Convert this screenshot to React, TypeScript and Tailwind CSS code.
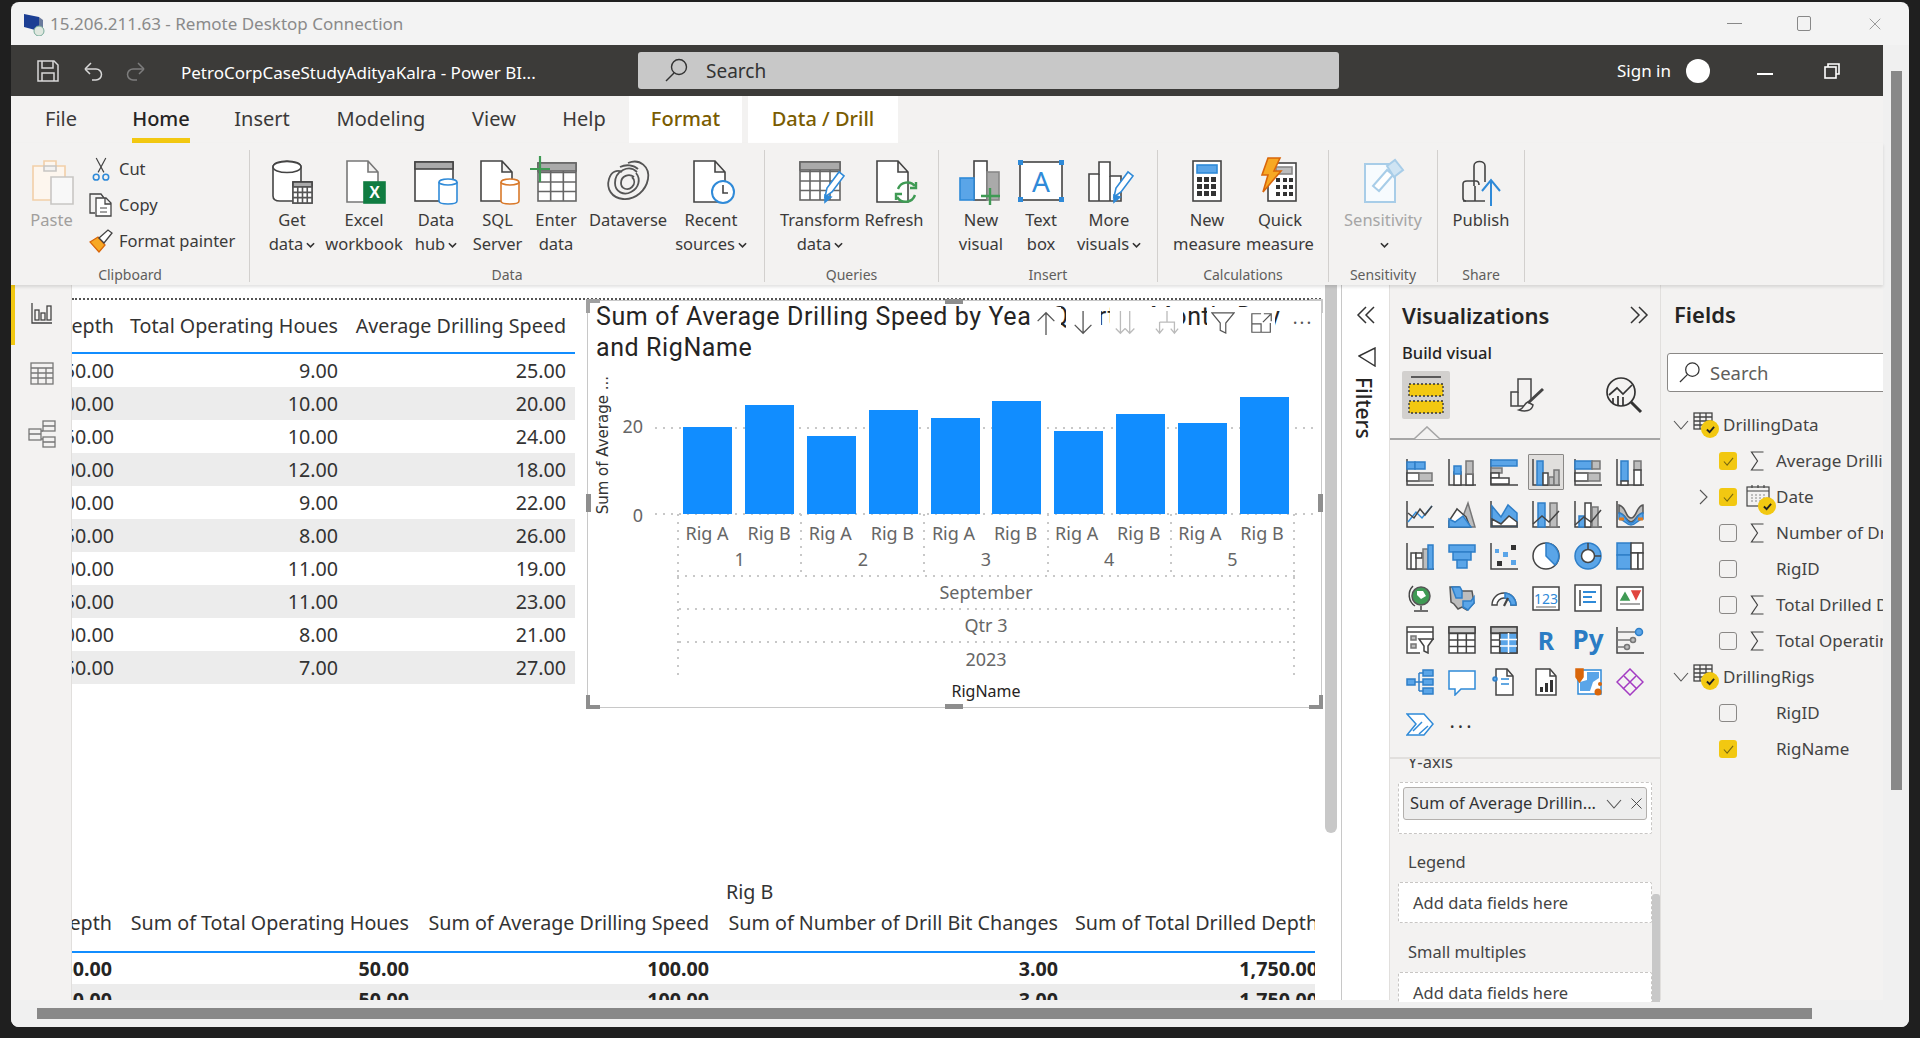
import type { ReactNode } from 'react';
import { X } from 'lucide-react';

const BLUE = '#5aa5e8';
const GRAY = '#bdbdbd';
const DARK = '#444';

const dotH = 'h-[2px] bg-[repeating-linear-gradient(90deg,#c8c8c8_0_2px,transparent_2px_8px)]';
const dotV = 'w-[2px] shrink-0 bg-[repeating-linear-gradient(180deg,#c8c8c8_0_2px,transparent_2px_8px)]';

const Caret = () => (
  <svg viewBox="0 0 10 6" className="inline-block w-[9px] h-[6px] ml-[3px] mb-[1px]" fill="none" stroke="#333" strokeWidth="1.8">
    <path d="M1 1l4 4 4-4" />
  </svg>
);

const Rb = ({ children, w = 48 }: { children: ReactNode; w?: number }) => (
  <svg viewBox="0 0 48 48" width={w} height={48} fill="none" stroke={DARK} strokeWidth="1.6" className="overflow-visible">
    {children}
  </svg>
);

const Grid = ({ x, y, w, h, c = 3, r = 3, stroke = '#555' }: { x: number; y: number; w: number; h: number; c?: number; r?: number; stroke?: string }) => (
  <g stroke={stroke}>
    <rect x={x} y={y} width={w} height={h} fill="#fff" />
    {Array.from({ length: c - 1 }).map((_, i) => (
      <path key={i} d={`M${x + ((i + 1) * w) / c} ${y}v${h}`} />
    ))}
    {Array.from({ length: r - 1 }).map((_, i) => (
      <path key={i} d={`M${x} ${y + ((i + 1) * h) / r}h${w}`} />
    ))}
  </g>
);

const Cyl = ({ x, y, w, h, stroke, fill = '#fff' }: { x: number; y: number; w: number; h: number; stroke: string; fill?: string }) => (
  <g stroke={stroke} fill={fill}>
    <path d={`M${x} ${y + 3}v${h - 6}c0 4 ${w} 4 ${w} 0v-${h - 6}`} />
    <ellipse cx={x + w / 2} cy={y + 3} rx={w / 2} ry={3} />
  </g>
);

const Page = ({ stroke = DARK }: { stroke?: string }) => (
  <path d="M7 3h21l10 11v30H7z M28 3v11h10" fill="#fff" stroke={stroke} />
);

const Pencil = () => (
  <g>
    <path d="M29 39l2-9 12-16 5 4-12 16z" fill="#fff" stroke="#2f8ad8" />
    <path d="M29 44l0-7 6 2z" fill="#2f8ad8" stroke="#2f8ad8" />
  </g>
);

const ribbonIcons: Record<string, ReactNode> = {
  get: (
    <Rb>
      <path d="M30 43H12c-6 0-7-3-7-5V9c0-8 28-8 28 0v16" fill="#fff" />
      <ellipse cx="19" cy="9" rx="14" ry="5.5" fill="#fff" />
      <rect x="25" y="24" width="19" height="21" fill="#fff" />
      <rect x="25" y="24" width="19" height="5" fill="#aaa" />
      <Grid x={25} y={29} w={19} h={16} c={4} r={3} />
    </Rb>
  ),
  excel: (
    <Rb>
      <Page stroke="#777" />
      <rect x="24" y="24" width="21" height="21" fill="#107c41" stroke="#107c41" />
      <text x="34.5" y="40" textAnchor="middle" fontSize="16" fontWeight="700" fill="#fff" stroke="none" fontFamily="'Liberation Sans', sans-serif">X</text>
    </Rb>
  ),
  hub: (
    <Rb>
      <rect x="3" y="4" width="38" height="39" fill="#fff" />
      <rect x="3" y="4" width="38" height="7" fill="#aaa" />
      <Cyl x={27} y={21} w={18} h={25} stroke="#2f8ad8" />
    </Rb>
  ),
  sql: (
    <Rb>
      <path d="M7 3h21l10 11v29H7z M28 3v11h10" fill="#fff" />
      <Cyl x={27} y={21} w={18} h={25} stroke="#d9792a" />
    </Rb>
  ),
  enter: (
    <Rb>
      <Grid x={6} y={5} w={38} h={38} c={3} r={4} stroke="#666" />
      <rect x="6" y="5" width="38" height="8" fill="#aaa" stroke="#666" />
      <path d="M8 -2v26M-2 11h20" stroke="#3f9a54" strokeWidth="2.2" />
    </Rb>
  ),
  dataverse: (
    <Rb>
      <g stroke="#555" strokeWidth="1.8">
        <path d="M24 5c12-5 22 4 20 16-2 11-12 21-25 20C8 40 2 31 5 21c2-7 8-10 13-7" />
        <path d="M33 14c-8-8-22-1-22 11 0 9 9 13 16 9 8-4 10-13 5-19" />
        <path d="M30 19c-5-4-13-1-13 6 0 6 7 8 11 4 3-3 3-7 0-10" />
        <path d="M16 9c6-3 14-2 18 2" />
      </g>
    </Rb>
  ),
  recent: (
    <Rb>
      <Page />
      <circle cx="36" cy="34" r="11" fill="#fff" stroke="#2f8ad8" strokeWidth="2" />
      <path d="M36 27v8h5" />
    </Rb>
  ),
  transform: (
    <Rb>
      <Grid x={4} y={4} w={40} h={38} c={4} r={4} stroke="#666" />
      <rect x="4" y="4" width="40" height="8" fill="#aaa" stroke="#666" />
      <Pencil />
    </Rb>
  ),
  refresh: (
    <Rb>
      <Page />
      <path d="M45 28a10 10 0 0 0-17 3M27 39a10 10 0 0 0 18-2" stroke="#3f9a54" strokeWidth="2.4" />
      <path d="M40 30h6v-6M32 36h-6v6" stroke="#3f9a54" strokeWidth="2.4" />
    </Rb>
  ),
  newVisual: (
    <Rb>
      <rect x="17" y="3" width="13" height="39" fill="#fff" />
      <rect x="30" y="14" width="12" height="28" fill="#aaa" stroke="#888" />
      <rect x="3" y="20" width="14" height="22" fill={BLUE} stroke="#2f8ad8" />
      <path d="M33 30v17M24 38h19" stroke="#3f9a54" strokeWidth="2.4" />
    </Rb>
  ),
  textbox: (
    <Rb>
      <rect x="3" y="4" width="42" height="38" fill="#fff" stroke="#444" />
      <rect x="1" y="2" width="5" height="5" fill="#2f8ad8" stroke="none" />
      <rect x="42" y="2" width="5" height="5" fill="#2f8ad8" stroke="none" />
      <rect x="1" y="39" width="5" height="5" fill="#2f8ad8" stroke="none" />
      <rect x="42" y="39" width="5" height="5" fill="#2f8ad8" stroke="none" />
      <text x="24" y="34" textAnchor="middle" fontSize="28" fill="#2f8ad8" stroke="none" fontFamily="'Noto Sans', sans-serif">A</text>
    </Rb>
  ),
  more: (
    <Rb>
      <path d="M4 43V16h10V4h11v14h11v25z" fill="#fff" />
      <path d="M14 16v27M25 18v25" />
      <Pencil />
    </Rb>
  ),
  measure: (
    <Rb>
      <rect x="10" y="3" width="28" height="40" fill="#fff" />
      <rect x="14" y="7" width="20" height="8" fill={BLUE} stroke="#2f8ad8" />
      <g fill="#333" stroke="none">
        {[19, 26, 33].map((y) =>
          [14, 21, 28].map((x) => <rect key={`${x}${y}`} x={x} y={y} width="5" height="5" />)
        )}
      </g>
    </Rb>
  ),
  quick: (
    <Rb>
      <rect x="12" y="5" width="28" height="38" fill="#fff" />
      <rect x="20" y="9" width="16" height="7" fill={GRAY} stroke="#888" />
      <g fill="#333" stroke="none">
        {[20, 27, 34].map((y) =>
          [20, 27, 33].map((x) => <rect key={`${x}${y}`} x={x} y={y} width="4" height="4" />)
        )}
      </g>
      <path d="M12 0h12l-6 13h7L7 34l5-17H6z" fill="#f7a823" stroke="#d9660a" />
    </Rb>
  ),
  sensitivity: (
    <Rb>
      <path d="M6 6h30v38H6z" stroke="#a8cde8" fill="#f7fbfe" strokeWidth="2" />
      <path d="M14 28l14-16 6 5-14 16z" stroke="#a8cde8" fill="#fff" strokeWidth="2" />
      <path d="M28 8l8-6 8 10-9 7z" stroke="#a8cde8" fill="#cfe4f3" strokeWidth="2" />
    </Rb>
  ),
  publish: (
    <Rb>
      <path d="M17 28V8c0-6 11-6 11 0v16" />
      <path d="M9 43c-2 0-3-1-3-3V26c0-2 2-3 4-3h9c2 0 3 2 3 4" />
      <path d="M6 43h22" />
      <path d="M18 43V28" />
      <path d="M34 48V23M25 33l9-11 9 11" stroke="#2f8ad8" strokeWidth="2" />
    </Rb>
  ),
};

const V = ({ children }: { children: ReactNode }) => (
  <svg viewBox="0 0 28 28" className="w-[28px] h-[28px]" fill="none" stroke={DARK} strokeWidth="1.5">
    {children}
  </svg>
);
const AxisL = () => <path d="M1 1v26h27" />;
const Blue = (p: { x: number; y: number; w: number; h: number }) => (
  <rect x={p.x} y={p.y} width={p.w} height={p.h} fill={BLUE} stroke="#2f7fc8" />
);
const Gr = (p: { x: number; y: number; w: number; h: number }) => (
  <rect x={p.x} y={p.y} width={p.w} height={p.h} fill={GRAY} stroke="#777" />
);
const Wt = (p: { x: number; y: number; w: number; h: number }) => (
  <rect x={p.x} y={p.y} width={p.w} height={p.h} fill="#fff" stroke={DARK} />
);

const vizIcons: ReactNode[] = [
  <V key="0"><AxisL /><Blue x={1} y={4} w={8} h={7} /><Blue x={9} y={4} w={10} h={7} /><Wt x={1} y={15} w={12} h={8} /><Gr x={13} y={15} w={13} h={8} /></V>,
  <V key="1"><AxisL /><Wt x={6} y={14} w={7} h={13} /><Blue x={6} y={8} w={7} h={8} /><Wt x={18} y={16} w={7} h={11} /><Gr x={18} y={3} w={7} h={13} /></V>,
  <V key="2"><AxisL /><Blue x={1} y={2} w={26} h={6} /><Gr x={1} y={10} w={11} h={5} /><Wt x={1} y={15} w={8} h={5} /><Wt x={1} y={20} w={18} h={6} /></V>,
  <V key="3"><AxisL /><Blue x={5} y={3} w={6} h={24} /><Wt x={11} y={15} w={5} h={12} /><Gr x={17} y={19} w={5} h={8} /><Gr x={22} y={12} w={5} h={15} /></V>,
  <V key="4"><AxisL /><Blue x={1} y={3} w={17} h={8} /><Gr x={18} y={3} w={8} h={8} /><Wt x={1} y={15} w={13} h={8} /><Gr x={14} y={15} w={12} h={8} /></V>,
  <V key="5"><AxisL /><Blue x={5} y={3} w={7} h={20} /><Wt x={5} y={23} w={7} h={4} /><Gr x={18} y={3} w={7} h={9} /><Wt x={18} y={12} w={7} h={15} /></V>,
  <V key="6"><AxisL /><path d="M2 22l8-10 6 6 10-12" stroke="#2f8ad8" /><path d="M2 13l6 5 6-9 5 6 7-9" /></V>,
  <V key="7"><path d="M1 27L9 10l5 9 6-16 7 24z" fill={GRAY} stroke="#777" /><path d="M1 27l0-6 8-12 9 8 4 10z" fill="#fff" /><path d="M1 27v-8l6 3 8-6 8 11z" fill={BLUE} stroke="#2f7fc8" /></V>,
  <V key="8"><AxisL /><path d="M2 6l9 11 7-12 9 8v13H2z" fill={BLUE} stroke="#2f7fc8" /><path d="M2 19l9 5 8-8 8 6v4H2z" fill="#fff" stroke="#444" /></V>,
  <V key="9"><AxisL /><Blue x={6} y={3} w={7} h={24} /><Gr x={18} y={3} w={7} h={24} /><path d="M1 24l9-8 7 6 10-11" /></V>,
  <V key="10"><AxisL /><Blue x={5} y={16} w={6} h={11} /><Wt x={11} y={3} w={6} h={24} /><Gr x={18} y={7} w={6} h={20} /><path d="M1 25l9-8 7 5 10-12" /></V>,
  <V key="11"><AxisL /><path d="M3 5c8 2 6 13 12 13s5-12 12-13v8c-7 1-7 9-12 9S10 14 3 13z" fill={GRAY} stroke="#555" /><path d="M3 13c7 1 7 10 12 10s5-9 12-10v6c-5 0-7 6-12 6s-7-6-12-6z" fill={BLUE} stroke="#2f7fc8" /><path d="M3 19h5M22 19h5" stroke="#e07a1f" strokeWidth="3" /></V>,
  <V key="12"><AxisL /><Wt x={5} y={11} w={5} h={16} /><Wt x={10} y={11} w={6} h={5} /><Gr x={17} y={7} w={5} h={20} /><Blue x={22} y={3} w={5} h={24} /></V>,
  <V key="13"><Blue x={1} y={3} w={26} h={7} /><Blue x={5} y={10} w={18} h={8} /><Blue x={9} y={18} w={10} h={8} /></V>,
  <V key="14"><AxisL /><g fill="#333" stroke="none"><rect x="7" y="19" width="5" height="5" /><rect x="21" y="3" width="5" height="5" /></g><g fill={BLUE} stroke="none"><rect x="5" y="7" width="4" height="4" /><rect x="13" y="10" width="5" height="5" /><rect x="21" y="18" width="5" height="5" /></g></V>,
  <V key="15"><circle cx="14" cy="14" r="13" fill="#fff" /><path d="M14 14V1a13 13 0 0 1 9 22z" fill={BLUE} stroke="#2f7fc8" /></V>,
  <V key="16"><circle cx="14" cy="14" r="13" fill={BLUE} stroke="#2f7fc8" /><circle cx="14" cy="14" r="6.5" fill="#fff" stroke="#444" /><path d="M14 1v6M27 14h-6" /></V>,
  <V key="17"><Blue x={1} y={1} w={14} h={12} /><Blue x={1} y={13} w={14} h={14} /><Wt x={15} y={1} w={12} h={10} /><Wt x={15} y={11} w={7} h={16} /><Wt x={22} y={11} w={5} h={16} /></V>,
  <V key="18"><circle cx="15" cy="12" r="9" fill="#3f9a54" stroke="#555" /><path d="M11 7h6l3 5-5 3-4-4z" fill="#fff" stroke="none" /><path d="M7 2a13 13 0 0 0 2 20M15 22v4M8 27h14" /></V>,
  <V key="19"><path d="M2 3h9l3 4h10l2 12-7 7-5-3-4 2-4-5-3-2z" fill={GRAY} stroke="#555" /><path d="M4 3h8l2 4v7H8zM15 17h8l3-4v6l-6 7-5-3z" fill={BLUE} stroke="#2f7fc8" /></V>,
  <V key="20"><path d="M2 21a12 12 0 0 1 24 0h-5a7 7 0 0 0-14 0z" fill="#fff" /><path d="M15 9a12 12 0 0 1 11 12h-5a7 7 0 0 0-6-7z" fill={BLUE} stroke="#2f7fc8" /><path d="M14 22l4-8" strokeWidth="2.2" /></V>,
  <V key="21"><rect x="1" y="3" width="26" height="23" fill="#fff" /><text x="14" y="20" textAnchor="middle" fontSize="14" fill="#2f8ad8" stroke="none" fontFamily="'Noto Sans', sans-serif">123</text><path d="M4 23h20" stroke="#999" /></V>,
  <V key="22"><rect x="1" y="1" width="26" height="26" fill="#fff" /><path d="M6 6v16" /><path d="M9 8h13M9 13h9M9 18h13" stroke="#2f8ad8" strokeWidth="2.2" /></V>,
  <V key="23"><rect x="1" y="3" width="26" height="23" fill="#fff" /><path d="M5 16l4-7 4 7z" fill="#3f9a54" stroke="#3f9a54" /><path d="M16 7h8l-4 8z" fill="#e0463f" stroke="#e0463f" /><path d="M4 20h20" stroke="#888" /></V>,
  <V key="24"><path d="M27 14V1H1v26h13" fill="#fff" /><path d="M1 6h26" /><rect x="5" y="10" width="5" height="4" fill={GRAY} stroke="#777" /><rect x="5" y="18" width="5" height="4" fill={GRAY} stroke="#777" /><path d="M13 13h14l-5 7v7l-4-2v-5z" fill="#fff" /></V>,
  <V key="25"><Grid x={1} y={1} w={26} h={26} c={3} r={4} stroke="#444" /><rect x="1" y="1" width="26" height="6" fill="#ccc" /></V>,
  <V key="26"><Grid x={1} y={1} w={26} h={26} c={3} r={4} stroke="#444" /><rect x="1" y="1" width="26" height="6" fill={GRAY} /><rect x="10" y="7" width="17" height="20" fill={BLUE} stroke="#444" /><path d="M10 13.5h17M10 20h17M18.5 7v20" stroke="#fff" /></V>,
  <span key="27" className="text-[25px] leading-none font-bold text-[#2b7cc4]">R</span>,
  <span key="28" className="text-[26px] leading-none font-bold text-[#2b7cc4] -mt-[3px]">Py</span>,
  <V key="29"><path d="M1 1v26h27" /><path d="M1 6h20M1 14h14M1 21h8" stroke="#777" /><circle cx="23" cy="6" r="3.5" fill={BLUE} stroke="#2f7fc8" /><circle cx="17" cy="14" r="2.5" fill={GRAY} stroke="#777" /><circle cx="11" cy="21" r="2.5" fill={GRAY} stroke="#777" /></V>,
  <V key="30"><Blue x={1} y={11} w={8} h={6} /><Blue x={17} y={2} w={10} h={6} /><Blue x={17} y={11} w={10} h={6} /><Blue x={17} y={20} w={10} h={6} /><path d="M9 14h8M13 5v18M13 5h4M13 23h4" stroke="#2f7fc8" /></V>,
  <V key="31"><path d="M1 3h26v18H13l-6 6v-6H1z" fill="#fff" stroke="#2f8ad8" /></V>,
  <V key="32"><path d="M6 1h11l6 7v19H6z" fill="#fff" /><path d="M17 1v7h6" /><circle cx="5" cy="11" r="2" fill={BLUE} stroke="#2f7fc8" /><path d="M11 11h8M11 16h8M5 17v0" stroke="#2f8ad8" /></V>,
  <V key="33"><path d="M4 1h14l6 7v19H4z" fill="#fff" /><path d="M18 1v7h6" /><g fill="#333" stroke="none"><rect x="8" y="19" width="3" height="5" /><rect x="13" y="15" width="3" height="9" /><rect x="18" y="12" width="3" height="12" /></g></V>,
  <V key="34"><rect x="4" y="2" width="23" height="24" fill="#fff" stroke="#2f8ad8" /><path d="M13 4h12v6l-6 4-3 9H6v-9l7-2z" fill={BLUE} stroke="none" /><path d="M2 1h7v8l-3.5 5L2 9z" fill="#d9660a" stroke="#d9660a" /><circle cx="24" cy="24" r="3.5" fill="#d9660a" stroke="none" /><circle cx="26" cy="16" r="2" fill="#d9660a" stroke="none" /></V>,
  <V key="35"><g stroke="#a33bc2"><path d="M14 1l13 13-13 13L1 14z" /><path d="M8 8l13 13M20 8L7 21" /></g></V>,
  <V key="36"><path d="M1 4h17l9 10-9 11H1l9-11z" fill="#fff" stroke="#2f8ad8" /><path d="M7 21l9-9M13 24l9-8" stroke="#2f8ad8" /></V>,
  <span key="37" className="text-[20px] leading-none tracking-[3px] text-[#333] -mt-[6px]">...</span>,
];

const RibbonBtn = ({ icon, lines, className, muted }: { icon: string; lines: ReactNode[]; className: string; muted?: boolean }) => (
  <div className={`flex flex-col items-center shrink-0 ${className}`}>
    <div className="h-[48px] flex items-center justify-center">{ribbonIcons[icon]}</div>
    <div className={`mt-[2px] text-[16.5px] leading-[24px] whitespace-nowrap text-center ${muted ? 'text-[#a6a6a6]' : 'text-[#3b3a39]'}`}>
      {lines.map((l, i) => (
        <div key={i}>{l}</div>
      ))}
    </div>
  </div>
);

const Group = ({ label, className, children }: { label: string; className: string; children: ReactNode }) => (
  <div className={`relative h-[132px] shrink-0 border-r border-[#d2d0ce] ${className}`}>
    <div className="flex pt-[8px] h-[112px]">{children}</div>
    <div className="absolute left-0 right-0 bottom-[-3px] text-center text-[14px] leading-[20px] text-[#605e5c]">{label}</div>
  </div>
);

const topRows = [
  ['150.00', '9.00', '25.00'],
  ['1200.00', '10.00', '20.00'],
  ['150.00', '10.00', '24.00'],
  ['1200.00', '12.00', '18.00'],
  ['1200.00', '9.00', '22.00'],
  ['150.00', '8.00', '26.00'],
  ['1200.00', '11.00', '19.00'],
  ['150.00', '11.00', '23.00'],
  ['1200.00', '8.00', '21.00'],
  ['150.00', '7.00', '27.00'],
];

const bars = [
  { rig: 'Rig A', v: 20 },
  { rig: 'Rig B', v: 25 },
  { rig: 'Rig A', v: 18 },
  { rig: 'Rig B', v: 24 },
  { rig: 'Rig A', v: 22 },
  { rig: 'Rig B', v: 26 },
  { rig: 'Rig A', v: 19 },
  { rig: 'Rig B', v: 23 },
  { rig: 'Rig A', v: 21 },
  { rig: 'Rig B', v: 27 },
];

const Cell = ({ children }: { children: ReactNode }) => (
  <div className="flex justify-end pr-[9px] whitespace-nowrap">{children}</div>
);

const TopTable = () => (
  <div className="w-[503px] shrink-0 overflow-hidden text-[19.7px] text-[#333]">
    <div className="grid grid-cols-[51px_224px_228px] h-[54px] items-center border-b-2 border-[#118dff]">
      <Cell>Depth</Cell>
      <Cell>Total Operating Houes</Cell>
      <Cell>Average Drilling Speed</Cell>
    </div>
    {topRows.map((r, i) => (
      <div key={i} className={`grid grid-cols-[51px_224px_228px] h-[33px] items-center ${i % 2 ? 'bg-[#ececec]' : 'bg-white'}`}>
        <Cell>{r[0]}</Cell>
        <Cell>{r[1]}</Cell>
        <Cell>{r[2]}</Cell>
      </div>
    ))}
  </div>
);

const BottomTable = () => {
  const cols = 'grid grid-cols-[49px_297px_300px_349px_260px]';
  return (
    <div className="w-[1243px] mt-[169px] overflow-hidden text-[19.7px] text-[#333]">
      <div className={`${cols} h-[31px] leading-[30px]`}>
        <div />
        <div />
        <div />
        <div className="pl-[8px]">Rig B</div>
      </div>
      <div className={`${cols} h-[45px] leading-[30px] border-b-2 border-[#118dff]`}>
        <Cell>Depth</Cell>
        <Cell>Sum of Total Operating Houes</Cell>
        <Cell>Sum of Average Drilling Speed</Cell>
        <Cell>Sum of Number of Drill Bit Changes</Cell>
        <div className="pl-[8px] whitespace-nowrap">Sum of Total Drilled Depth</div>
      </div>
      <div className={`${cols} h-[31px] items-center font-bold text-[#252423]`}>
        <Cell>150.00</Cell>
        <Cell>50.00</Cell>
        <Cell>100.00</Cell>
        <Cell>3.00</Cell>
        <Cell>1,750.00</Cell>
      </div>
      <div className={`${cols} h-[31px] items-center font-bold text-[#252423] bg-[#ececec]`}>
        <Cell>150.00</Cell>
        <Cell>50.00</Cell>
        <Cell>100.00</Cell>
        <Cell>3.00</Cell>
        <Cell>1,750.00</Cell>
      </div>
    </div>
  );
};

const Handle = ({ className }: { className: string }) => <span className={`absolute bg-[#8e8e8e] ${className}`} />;

const VisualHeaderIcons = () => (
  <>
    {[
      { cls: 'left-[443px] w-[30px]', d: 'M14 4v24M5 13l9-9 9 9', c: '#555' },
      { cls: 'left-[478px] w-[35px]', d: 'M13 2v24M4 17l9 9 9-9', c: '#555' },
      { cls: 'left-[522px] w-[32px]', d: 'M8 2v24M3 21l5 5 5-5M18 2v24M13 21l5 5 5-5', c: '#bbb' },
      { cls: 'left-[563px] w-[32px]', d: 'M14 2v12M6 14h16v12M6 14v12M2 21l4 5 4-5M18 21l4 5 4-5', c: '#bbb' },
    ].map((b) => (
      <span key={b.cls} className={`absolute top-[6px] h-[32px] bg-white flex items-center justify-center ${b.cls}`}>
        <svg viewBox="0 0 28 30" className="w-[26px] h-[28px]" fill="none" stroke={b.c} strokeWidth="1.4">
          <path d={b.d} />
        </svg>
      </span>
    ))}
    <span className="absolute left-[619px] top-[6px] h-[32px] w-[31px] bg-white flex items-center justify-center">
      <svg viewBox="0 0 26 26" className="w-[24px] h-[24px]" fill="none" stroke="#555" strokeWidth="1.3">
        <path d="M1 2h24l-9 11v11l-6-3v-8z" />
      </svg>
    </span>
    <span className="absolute left-[650px] top-[6px] h-[32px] w-[37px] bg-white flex items-center justify-end pr-[1px]">
      <svg viewBox="0 0 26 26" className="w-[24px] h-[24px]" fill="none" stroke="#555" strokeWidth="1.3">
        <path d="M12 3H2v20h20V13M2 14h10v9M15 3h8v8M23 3l-9 9" />
      </svg>
    </span>
    <span className="absolute left-[700px] top-[6px] h-[32px] w-[30px] bg-white text-[#555] text-[18px] leading-[20px] tracking-[2px] text-center">...</span>
  </>
);

const ChartVisual = () => (
  <div className="relative ml-[12px] w-[735px] h-[408px] border border-[#c8c8c8] shrink-0">
    <div className="pl-[8px] h-[70px] font-['Roboto',sans-serif] text-[25px] tracking-[0.6px] leading-[31px] text-[#252423] overflow-hidden">
      <div className="whitespace-nowrap">Sum of Average Drilling Speed by Year, Quarter, Month, Day</div>
      <div>and RigName</div>
    </div>
    <VisualHeaderIcons />
    <div className="flex">
      <div className="relative w-[89px] h-[143px] shrink-0">
        <span className="absolute left-[5px] bottom-[0px] [writing-mode:vertical-rl] rotate-180 font-['DejaVu_Sans',sans-serif] text-[15px] leading-[20px] text-[#333] whitespace-nowrap">
          Sum of Average ...
        </span>
        <span className="absolute right-[34px] top-[42px] text-[18px] leading-[26px] text-[#666]">20</span>
        <span className="absolute right-[34px] bottom-[-14px] text-[18px] leading-[26px] text-[#666]">0</span>
      </div>
      <div className="w-[618px] shrink-0">
        <div className="relative h-[143px]">
          <span className={`absolute left-[-22px] right-[-18px] top-[56px] ${dotH}`} />
          <span className={`absolute left-[-22px] right-[-18px] bottom-[-1px] ${dotH}`} />
          <div className="relative grid grid-cols-10 items-end h-full">
            {bars.map((b, i) => (
              <div key={i} className="w-[49px] mx-auto bg-[#118dff]" style={{ height: b.v * 4.35 }} />
            ))}
          </div>
        </div>
        <div className="flex h-[61px] text-[18px] text-[#666]">
          <span className={dotV} />
          {[1, 2, 3, 4, 5].map((d) => (
            <div key={d} className="flex flex-1">
              <div className="flex-1 pt-[6px]">
                <div className="grid grid-cols-2 text-center leading-[26px] -ml-[3px]">
                  <span>Rig A</span>
                  <span>Rig B</span>
                </div>
                <div className="text-center leading-[26px]">{d}</div>
              </div>
              <span className={dotV} />
            </div>
          ))}
        </div>
        <div className={dotH} />
        <div className="flex h-[98px] text-center text-[18px] text-[#666]">
          <span className={dotV} />
          <div className="flex-1">
            <div className="h-[31px] leading-[31px]">September</div>
            <div className={dotH} />
            <div className="h-[31px] leading-[31px]">Qtr 3</div>
            <div className={dotH} />
            <div className="h-[32px] leading-[32px]">2023</div>
          </div>
          <span className={dotV} />
        </div>
        <div className="mt-[4px] text-center text-[16px] leading-[24px] text-[#252423]">RigName</div>
      </div>
    </div>
    <span className="absolute -left-[2px] -top-[2px] w-[14px] h-[14px] border-l-4 border-t-4 border-[#a0a0a0]" />
    <span className="absolute -right-[2px] -top-[2px] w-[14px] h-[14px] border-r-2 border-t-2 border-[#c8c8c8]" />
    <span className="absolute -left-[2px] -bottom-[2px] w-[14px] h-[14px] border-l-4 border-b-4 border-[#8e8e8e]" />
    <span className="absolute -right-[2px] -bottom-[2px] w-[14px] h-[14px] border-r-4 border-b-4 border-[#8e8e8e]" />
    <Handle className="left-[357px] -top-[2px] w-[18px] h-[5px]" />
    <Handle className="left-[357px] -bottom-[2px] w-[18px] h-[5px]" />
    <Handle className="-left-[2px] top-[193px] w-[5px] h-[18px]" />
    <Handle className="-right-[2px] top-[193px] w-[5px] h-[18px]" />
  </div>
);

const Chevrons = ({ dir }: { dir: 'l' | 'r' }) => (
  <svg viewBox="0 0 20 20" className="w-[20px] h-[20px]" fill="none" stroke="#333" strokeWidth="1.5">
    <path d={dir === 'l' ? 'M10 2L2 10l8 8M18 2l-8 8 8 8' : 'M2 2l8 8-8 8M10 2l8 8-8 8'} />
  </svg>
);

const Check = () => (
  <span className="absolute -right-[6px] -bottom-[8px] w-[18px] h-[18px] rounded-full bg-[#f2c811] flex items-center justify-center">
    <svg viewBox="0 0 10 10" className="w-[9px] h-[9px]" fill="none" stroke="#222" strokeWidth="2">
      <path d="M1 5l3 3 5-6" />
    </svg>
  </span>
);

const Chev = ({ open }: { open?: boolean }) => (
  <svg viewBox="0 0 16 16" className="w-[16px] h-[16px]" fill="none" stroke="#555" strokeWidth="1.1">
    <path d={open ? 'M1 4l7 8 7-8' : 'M5 1l7 7-7 7'} />
  </svg>
);

const TableRow = ({ name }: { name: string }) => (
  <div className="flex items-center h-[36px]">
    <span className="ml-[12px] w-[20px] shrink-0">
      <Chev open />
    </span>
    <span className="relative w-[20px] h-[18px] -mt-[8px] shrink-0">
      <svg viewBox="0 0 20 18" className="w-[20px] h-[18px]" fill="none" stroke="#444" strokeWidth="1.3">
        <rect x="1" y="1" width="18" height="16" />
        <path d="M1 5h18M7 1v16M13 1v16M1 9h18M1 13h18" />
      </svg>
      <Check />
    </span>
    <span className="ml-[10px] -mt-[1px] text-[17px] text-[#444] whitespace-nowrap">{name}</span>
  </div>
);

const FieldRow = ({ name, checked, icon, expand }: { name: string; checked?: boolean; icon?: 'sigma' | 'date'; expand?: boolean }) => (
  <div className="flex items-center h-[36px]">
    <span className="ml-[34px] w-[24px] shrink-0">{expand && <Chev />}</span>
    <span className={`w-[18px] h-[18px] shrink-0 rounded-[3px] flex items-center justify-center ${checked ? 'bg-[#f2c811]' : 'border border-[#8a8886]'}`}>
      {checked && (
        <svg viewBox="0 0 12 12" className="w-[11px] h-[11px]" fill="none" stroke="#7a6a10" strokeWidth="1.2">
          <path d="M1 6l3.500 4L11 2" />
        </svg>
      )}
    </span>
    <span className="relative w-[39px] shrink-0 flex justify-start">
      {icon === 'sigma' && (
        <svg viewBox="0 0 14 20" className="ml-[13px] w-[15px] h-[20px]" fill="none" stroke="#444" strokeWidth="1.2">
          <path d="M13 1H1l6 9-6 9h12" />
        </svg>
      )}
      {icon === 'date' && (
        <span className="relative ml-[9px] w-[24px] h-[22px] -mt-[2px]">
          <svg viewBox="0 0 24 22" className="w-[24px] h-[22px]" fill="none" stroke="#444" strokeWidth="1.2">
            <rect x="1" y="2" width="22" height="19" />
            <path d="M1 6h22M6 0v3M12 0v3M18 0v3" />
            <path d="M5 10h14M5 13h14M5 16h14" stroke="#888" strokeDasharray="2 2" />
          </svg>
          <Check />
        </span>
      )}
    </span>
    <span className="text-[17px] text-[#444] whitespace-nowrap">{name}</span>
  </div>
);

const Well = ({ className, children }: { className?: string; children: ReactNode }) => (
  <div className={`ml-[8px] w-[254px] bg-white border border-dashed border-[#c8c6c4] rounded-[2px] ${className ?? ''}`}>{children}</div>
);

const VizPane = () => (
  <div className="w-[271px] shrink-0 h-full bg-[#f3f2f1] border-l border-[#e1dfdd]">
    <div className="flex items-center justify-between pl-[12px] pr-[11px] pt-[14px] h-[45px]">
      <span className="text-[22px] leading-[30px] font-semibold text-[#252423]">Visualizations</span>
      <Chevrons dir="r" />
    </div>
    <div className="pl-[12px] mt-[11px] text-[16.5px] leading-[24px] font-medium text-[#252423]">Build visual</div>
    <div className="flex mt-[6px] pl-[12px] h-[48px] items-center">
      <div className="w-[48px] h-[48px] rounded-[2px] bg-[#d2d0ce] flex items-center justify-center">
        <svg viewBox="0 0 36 40" className="w-[36px] h-[40px]" fill="none" stroke="#333" strokeWidth="1.3">
          <path d="M3 2h30" strokeWidth="1.5" />
          <rect x="1" y="9" width="34" height="12" fill="#f2c811" strokeDasharray="2 2" />
          <rect x="1" y="26" width="34" height="12" fill="#f2c811" strokeDasharray="2 2" />
        </svg>
      </div>
      <svg viewBox="0 0 34 36" className="ml-[60px] w-[34px] h-[36px]" fill="none" stroke="#444" strokeWidth="1.5">
        <path d="M14 29H1V15h7V2h13v20" />
        <path d="M8 15v14" />
        <path d="M33 12L18 26" strokeWidth="3" />
        <path d="M18 25c-4 1-3 6-9 8 6 2 13 1 14-5z" />
      </svg>
      <svg viewBox="0 0 38 38" className="ml-[61px] w-[38px] h-[38px]" fill="none" stroke="#333" strokeWidth="1.7">
        <circle cx="16" cy="16" r="14" />
        <path d="M4 19l8-7 6 6 9-9" />
        <path d="M8 28v-6M13 29v-9M18 29v-8" />
        <path d="M26 26l10 10" strokeWidth="3" />
      </svg>
    </div>
    <div className="relative mt-[19px] h-[2px] bg-[#a6a6a6]">
      <svg viewBox="0 0 26 14" className="absolute left-[24px] -top-[12px] w-[26px] h-[14px]" fill="#f3f2f1" stroke="#a6a6a6" strokeWidth="1.6">
        <path d="M0 13L13 1l13 12" />
      </svg>
    </div>
    <div className="grid grid-cols-[repeat(6,42px)] auto-rows-[42px] mt-[11px] pl-[9px] h-[306px]">
      {vizIcons.map((ic, i) => (
        <div key={i} className={`flex items-center justify-center ${i === 3 ? 'bg-[#e1dfdd] border border-[#8a8886] rounded-[1px] m-[3px]' : ''}`}>
          {ic}
        </div>
      ))}
    </div>
    <div className="relative border-t-2 border-[#e1dfdd] h-[245px] overflow-hidden text-[#444] text-[16.5px]">
      <div className="pl-[18px] -mt-[9px] leading-[24px]">Y-axis</div>
      <Well className="mt-[8px] h-[52px] p-[4px]">
        <div className="flex items-center h-[33px] bg-[#ededed] border border-[#b3b0ad] rounded-[3px] pl-[6px] text-[#333]">
          <span className="w-[196px] whitespace-nowrap overflow-hidden">Sum of Average Drillin...</span>
          <svg viewBox="0 0 16 10" className="w-[16px] h-[10px]" fill="none" stroke="#555" strokeWidth="1.1">
            <path d="M1 1l7 8 7-8" />
          </svg>
          <X className="ml-[5px] w-[19px] h-[19px] text-[#444]" strokeWidth={1.2} />
        </div>
      </Well>
      <div className="pl-[18px] mt-[16px] leading-[24px]">Legend</div>
      <Well className="mt-[8px] h-[41px] pl-[14px] leading-[39px]">Add data fields here</Well>
      <div className="pl-[18px] mt-[17px] leading-[24px]">Small multiples</div>
      <Well className="mt-[8px] h-[41px] pl-[14px] leading-[39px]">Add data fields here</Well>
      <span className="absolute right-0 top-[135px] bottom-0 w-[8px] bg-[#c8c8c8] rounded-t-[3px]" />
    </div>
  </div>
);

const FieldsPane = () => (
  <div className="w-[223px] shrink-0 h-full bg-[#f3f2f1] border-l border-[#e1dfdd] overflow-hidden">
    <div className="pl-[13px] pt-[14px] h-[45px] text-[22px] leading-[30px] font-semibold text-[#252423]">Fields</div>
    <div className="flex items-center ml-[6px] mt-[23px] w-[240px] h-[39px] bg-white border border-[#8a8886] rounded-[3px] pl-[11px]">
      <svg viewBox="0 0 22 22" className="w-[21px] h-[21px]" fill="none" stroke="#333" strokeWidth="1.3">
        <circle cx="14" cy="8" r="7" />
        <path d="M9 13l-8 8" />
      </svg>
      <span className="ml-[10px] text-[18.5px] text-[#605e5c]">Search</span>
    </div>
    <div className="mt-[15px]">
      <TableRow name="DrillingData" />
      <FieldRow name="Average Drilling Speed" checked icon="sigma" />
      <FieldRow name="Date" checked icon="date" expand />
      <FieldRow name="Number of Drill Bit Changes" icon="sigma" />
      <FieldRow name="RigID" />
      <FieldRow name="Total Drilled Depth" icon="sigma" />
      <FieldRow name="Total Operating Houes" icon="sigma" />
      <TableRow name="DrillingRigs" />
      <FieldRow name="RigID" />
      <FieldRow name="RigName" checked />
    </div>
  </div>
);

const NavRail = () => (
  <div className="w-[61px] shrink-0 h-full bg-[#f3f2f1] border-r border-[#e1dfdd]">
    <div className="relative h-[60px] flex items-center justify-center">
      <span className="absolute left-0 top-0 bottom-0 w-[4px] bg-[#f2c811]" />
      <svg viewBox="0 0 22 22" className="w-[22px] h-[22px] ml-[2px] -mt-[4px]" fill="none" stroke="#444" strokeWidth="1.3">
        <path d="M1 1v20h20" />
        <rect x="4" y="8" width="4" height="10" />
        <rect x="10" y="11" width="4" height="7" />
        <rect x="16" y="4" width="4" height="14" />
      </svg>
    </div>
    <div className="flex justify-center mt-[17px]">
      <svg viewBox="0 0 24 23" className="w-[24px] h-[23px] ml-[2px]" fill="none" stroke="#777" strokeWidth="1.3">
        <rect x="1" y="1" width="22" height="21" />
        <path d="M1 6h22M1 11h22M1 16h22M8 6v16M16 6v16" />
      </svg>
    </div>
    <div className="flex justify-center mt-[35px]">
      <svg viewBox="0 0 28 28" className="w-[28px] h-[28px] ml-[2px]" fill="none" stroke="#777" strokeWidth="1.3">
        <rect x="1" y="9" width="12" height="11" />
        <rect x="15" y="1" width="12" height="10" />
        <rect x="15" y="17" width="12" height="10" />
        <path d="M1 14h12M15 6h12M15 22h12M13 11h2M13 19h2" />
      </svg>
    </div>
  </div>
);

const Ribbon = () => (
  <div className="flex h-[142px] pt-[7px] bg-[#f3f2f1] shadow-[0_2px_3px_rgba(0,0,0,0.12)] relative z-10">
    <Group label="Clipboard" className="w-[239px] pl-[3px]">
      <div className="w-[75px] flex flex-col items-center shrink-0">
        <svg viewBox="0 0 44 48" className="w-[44px] h-[48px] ml-[3px]" fill="none" strokeWidth="1.6">
          <path d="M2 8h11V3h12v5h9v34H2z" stroke="#f2cfa8" fill="#fdf6ee" />
          <path d="M13 8h12v5H13z" stroke="#c8c6c4" fill="#f3f2f1" />
          <path d="M20 19h22v27H20z" stroke="#c8c6c4" fill="#f8f8f8" />
        </svg>
        <div className="mt-[1px] text-[16.5px] leading-[25px] text-[#a19f9d]">Paste</div>
      </div>
      <div className="flex flex-col text-[16.5px] text-[#3b3a39] -mt-[7px]">
        <div className="flex items-center h-[36px]">
          <svg viewBox="0 0 18 26" className="w-[24px] h-[25px]" fill="none" stroke="#444" strokeWidth="1.2">
            <path d="M4 1l8 15M14 1L6 16" />
            <circle cx="4" cy="21" r="3" stroke="#2f8ad8" strokeWidth="1.6" />
            <circle cx="14" cy="21" r="3" stroke="#2f8ad8" strokeWidth="1.6" />
          </svg>
          <span className="ml-[6px]">Cut</span>
        </div>
        <div className="flex items-center h-[36px]">
          <svg viewBox="0 0 24 24" className="w-[24px] h-[24px]" fill="none" stroke="#444" strokeWidth="1.3">
            <path d="M6 20H1V1h11l3 4" />
            <path d="M7 5h10l5 5v13H7zM16 5v6h6" fill="#fff" />
            <path d="M11 15h7M11 19h7" strokeWidth="1" />
          </svg>
          <span className="ml-[6px]">Copy</span>
        </div>
        <div className="flex items-center h-[36px]">
          <svg viewBox="0 0 24 24" className="w-[24px] h-[24px]" fill="none" stroke="#444" strokeWidth="1.3">
            <path d="M1 13L9 8l7 8-6 7z" fill="#f7a823" stroke="#d9660a" />
            <path d="M10 9l9-8 4 3-8 10z" fill="#fff" />
          </svg>
          <span className="ml-[6px] whitespace-nowrap">Format painter</span>
        </div>
      </div>
    </Group>
    <Group label="Data" className="w-[515px] pl-[9px]">
      <RibbonBtn icon="get" className="w-[66px]" lines={['Get', <>data<Caret /></>]} />
      <RibbonBtn icon="excel" className="w-[78px]" lines={['Excel', 'workbook']} />
      <RibbonBtn icon="hub" className="w-[66px]" lines={['Data', <>hub<Caret /></>]} />
      <RibbonBtn icon="sql" className="w-[57px]" lines={['SQL', 'Server']} />
      <RibbonBtn icon="enter" className="w-[60px]" lines={['Enter', 'data']} />
      <RibbonBtn icon="dataverse" className="w-[84px]" lines={['Dataverse']} />
      <RibbonBtn icon="recent" className="w-[82px]" lines={['Recent', <>sources<Caret /></>]} />
    </Group>
    <Group label="Queries" className="w-[174px] pl-[11px]">
      <RibbonBtn icon="transform" className="w-[88px]" lines={['Transform', <>data<Caret /></>]} />
      <RibbonBtn icon="refresh" className="w-[60px]" lines={['Refresh']} />
    </Group>
    <Group label="Insert" className="w-[219px] pl-[11px]">
      <RibbonBtn icon="newVisual" className="w-[62px]" lines={['New', 'visual']} />
      <RibbonBtn icon="textbox" className="w-[58px]" lines={['Text', 'box']} />
      <RibbonBtn icon="more" className="w-[78px]" lines={['More', <>visuals<Caret /></>]} />
    </Group>
    <Group label="Calculations" className="w-[171px] pl-[10px]">
      <RibbonBtn icon="measure" className="w-[78px]" lines={['New', 'measure']} />
      <RibbonBtn icon="quick" className="w-[68px]" lines={['Quick', 'measure']} />
    </Group>
    <Group label="Sensitivity" className="w-[109px] pl-[4px]">
      <RibbonBtn icon="sensitivity" muted className="w-[100px]" lines={['Sensitivity', <Caret key="c" />]} />
    </Group>
    <Group label="Share" className="w-[87px] pl-[3px]">
      <RibbonBtn icon="publish" className="w-[80px]" lines={['Publish']} />
    </Group>
  </div>
);

const Tabs = () => (
  <div className="flex h-[47px] bg-[#f3f2f1] text-[20px] text-[#3b3a39]">
    <div className="w-[100px] flex items-center justify-center pb-[2px]">File</div>
    <div className="relative w-[100px] flex items-center justify-center pb-[2px] font-medium text-[#252423]">
      Home
      <span className="absolute left-[21px] right-[21px] bottom-0 h-[5px] bg-[#f2c811]" />
    </div>
    <div className="w-[102px] flex items-center justify-center pb-[2px]">Insert</div>
    <div className="w-[136px] flex items-center justify-center pb-[2px]">Modeling</div>
    <div className="w-[90px] flex items-center justify-center pb-[2px]">View</div>
    <div className="w-[90px] flex items-center justify-center pb-[2px]">Help</div>
    <div className="w-[113px] flex items-center justify-center pb-[2px] bg-white text-[#7a5c00] font-medium">Format</div>
    <div className="w-[150px] ml-[6px] flex items-center justify-center pb-[2px] bg-white text-[#7a5c00] font-medium">Data / Drill</div>
  </div>
);

const PbiBar = () => (
  <div className="flex items-center h-[51px] bg-[#3c3b39] text-white">
    <svg viewBox="0 0 22 22" className="ml-[26px] w-[22px] h-[22px]" fill="none" stroke="#d8d8d8" strokeWidth="1.5">
      <path d="M1 1h16l4 4v16H1z" />
      <path d="M5 1v7h11V1M5 21v-8h12v8" />
    </svg>
    <svg viewBox="0 0 20 22" className="ml-[24px] w-[20px] h-[22px]" fill="none" stroke="#d8d8d8" strokeWidth="1.5">
      <path d="M2 9l5 5M2 9l6-6" />
      <path d="M2 9h11a5.500 5.500 0 0 1 0 11H9" />
    </svg>
    <svg viewBox="0 0 20 22" className="ml-[23px] w-[20px] h-[22px]" fill="none" stroke="#7d7d7d" strokeWidth="1.5">
      <path d="M18 9l-5 5M18 9l-6-6" />
      <path d="M18 9H7a5.500 5.500 0 0 0 0 11h4" />
    </svg>
    <span className="ml-[35px] w-[457px] pt-[5px] text-[17px] whitespace-nowrap">PetroCorpCaseStudyAdityaKalra - Power BI...</span>
    <div className="flex items-center w-[701px] h-[37px] -mt-[1px] bg-[#c8c8c8] rounded-[3px] pl-[26px] text-[#333] text-[19px]">
      <svg viewBox="0 0 24 24" className="w-[24px] h-[24px]" fill="none" stroke="#333" strokeWidth="1.4">
        <circle cx="15" cy="9" r="7.500" />
        <path d="M10 15l-8 8" />
      </svg>
      <span className="ml-[18px] pt-[3px]">Search</span>
    </div>
    <span className="ml-[278px] pt-[1px] text-[17px]">Sign in</span>
    <span className="ml-[15px] w-[24px] h-[24px] rounded-full bg-white" />
    <span className="ml-[47px] w-[16px] h-[2px] bg-white mt-[6px]" />
    <svg viewBox="0 0 16 16" className="ml-[51px] w-[16px] h-[16px]" fill="none" stroke="#fff" strokeWidth="1.6">
      <path d="M4 4V1h11v10h-3" />
      <rect x="1" y="4" width="11" height="11" />
    </svg>
  </div>
);

export default function App() {
  return (
    <div className="w-[1920px] h-[1038px] overflow-hidden bg-[#1f1f1f] pt-[2px] pl-[11px] font-['Noto_Sans',sans-serif]">
      <div className="flex flex-col w-[1898px] h-[1025px] rounded-[8px] bg-[#f3f3f3] overflow-hidden">
        <div className="flex items-center h-[43px] shrink-0 text-[#8a8a8a]">
          <svg viewBox="0 0 22 24" className="ml-[12px] w-[22px] h-[24px]">
            <path d="M1 2l15 3v14L1 15z" fill="#1c3f94" />
            <path d="M16 5l4 3v10l-4 1z" fill="#6a7a9c" />
            <circle cx="16" cy="19" r="5" fill="#dfe7df" stroke="#7a9" />
          </svg>
          <span className="ml-[5px] text-[17px] whitespace-nowrap">15.206.211.63 - Remote Desktop Connection</span>
          <div className="ml-auto flex items-center text-[#888]">
            <span className="w-[15px] h-[1px] bg-[#888]" />
            <span className="ml-[55px] w-[14px] h-[15px] rounded-[2px] border border-[#888]" />
            <X className="ml-[54px] mr-[24px] w-[20px] h-[20px]" strokeWidth={1} />
          </div>
        </div>
        <div className="flex flex-1 min-h-0">
          <div className="flex flex-col w-[1872px] shrink-0">
            <PbiBar />
            <Tabs />
            <Ribbon />
            <div className="flex h-[715px] shrink-0">
              <NavRail />
              <div className="relative w-[1269px] shrink-0 h-full bg-white overflow-hidden">
                <div className="mt-[13px] w-[1249px] h-[2px] border-t-2 border-dotted border-[#555]" />
                <div className="flex">
                  <TopTable />
                  <ChartVisual />
                </div>
                <BottomTable />
                <span className="absolute left-[1253px] top-0 w-[12px] h-[548px] bg-[#c8c8c8] rounded-b-[6px]" />
              </div>
              <div className="w-[48px] shrink-0 h-full bg-white border-l border-[#c8c8c8] flex flex-col items-center pt-[20px]">
                <Chevrons dir="l" />
                <svg viewBox="0 0 18 20" className="mt-[22px] w-[18px] h-[20px] ml-[2px]" fill="none" stroke="#333" strokeWidth="1.4">
                  <path d="M1 9L17 1v18z" />
                </svg>
                <span className="mt-[10px] -ml-[4px] [writing-mode:vertical-rl] text-[21px] leading-[24px] font-medium text-[#252423]">Filters</span>
              </div>
              <VizPane />
              <FieldsPane />
            </div>
            <div className="flex items-center h-[27px] pl-[26px] bg-[#f0f0f0]">
              <span className="w-[1775px] h-[11px] bg-[#888]" />
            </div>
          </div>
          <div className="flex-1 pt-[26px] bg-[#f0f0f0]">
            <div className="ml-[8px] w-[11px] h-[719px] bg-[#888]" />
          </div>
        </div>
      </div>
    </div>
  );
}
